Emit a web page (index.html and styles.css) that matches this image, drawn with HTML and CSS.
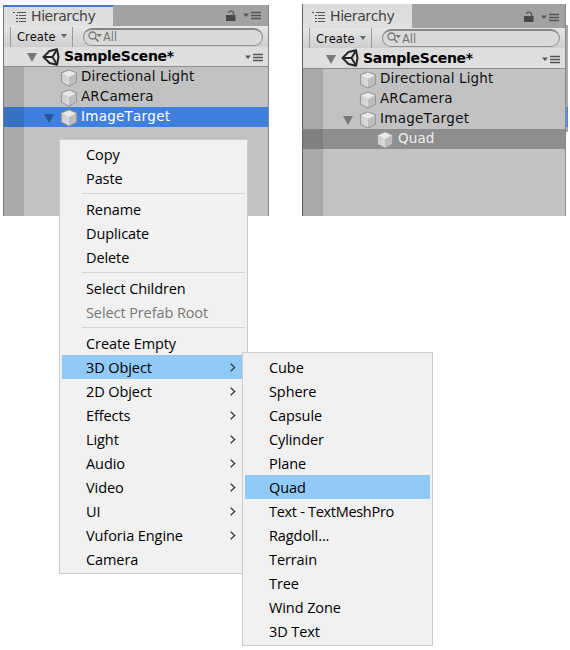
FILE: index.html
```html
<!DOCTYPE html>
<html lang="en">
<head>
<meta charset="utf-8">
<title>Hierarchy</title>
<link rel="stylesheet" href="styles.css">
</head>
<body>
<svg class="defs" width="0" height="0">
  <defs>
    <linearGradient id="face" x1="0" y1="0" x2="1" y2="1"><stop offset="0" stop-color="#c8c8c8"/><stop offset="1" stop-color="#e0e0e0"/></linearGradient>
  </defs>
  <symbol id="list" viewBox="0 0 14 12"><path d="M0 1.500h2M4 1.500h9M3 4.500h2M6 4.500h7M3 7.500h2M6 7.500h7M3 10.500h2M6 10.500h7" stroke="#555" stroke-width="1.200"/></symbol>
  <symbol id="lock" viewBox="0 0 10 12"><path d="M0 5h9.500v6h-9.500z" fill="#474747"/><path d="M2.500 3c.3-2.700 5-2.700 5 .500v3" fill="none" stroke="#5a5a5a" stroke-width="1.300"/></symbol>
  <symbol id="options" viewBox="0 0 18 9"><path d="M0 2.500h6l-3 3.500z" fill="#555"/><path d="M8 1.500h10M8 4.500h10M8 7.500h10" stroke="#555" stroke-width="1.400"/></symbol>
  <symbol id="search" viewBox="0 0 15 13"><circle cx="4.500" cy="4.500" r="3.500" fill="none" stroke="#777" stroke-width="1.300"/><path d="M7 7l3.500 3.500" stroke="#777" stroke-width="1.700"/><path d="M8.500 3h5.500l-2.700 3.200z" fill="#777"/></symbol>
  <symbol id="scene" viewBox="0 0 18 18"><path d="M1.500 9L7.500 3 15 1.200 16.500 9 15 16.800 7.500 15z" fill="#e2e2e2" stroke="#262626" stroke-width="2" stroke-linejoin="round"/><path d="M2 9h8.500M10.500 9L15 1.500M10.500 9l4.500 7.500" stroke="#262626" stroke-width="2"/></symbol>
  <symbol id="cube" viewBox="0 0 18 18"><path d="M9 1l7.500 3v9L9 17l-7.500-4V4z" fill="#ddd" stroke="#979797" stroke-width="1.200"/><path d="M2 4.500L9 8v8.300L2 12.700z" fill="url(#face)"/><path d="M16 4.500L9 8v8.300l7-3.600z" fill="#bebebe"/><path d="M9 1.600l6.500 2.700L9 7.700 2.500 4.300z" fill="#e9e9e9"/></symbol>
  <symbol id="chevron" viewBox="0 0 6 9"><path d="M.7.7l4 3.800-4 3.800" fill="none" stroke="#333" stroke-width="1.200"/></symbol>
</svg>

<main class="canvas">
  <section class="panel first">
    <header class="tabs"><div class="tab"><svg class="list"><use href="#list"/></svg><span>Hierarchy</span></div><svg class="lock"><use href="#lock"/></svg><svg class="options"><use href="#options"/></svg></header>
    <div class="toolbar"><div class="create">Create<i></i></div><div class="search"><svg><use href="#search"/></svg>All</div></div>
    <div class="scene"><i class="fold"></i><svg class="logo"><use href="#scene"/></svg><b>SampleScene*</b><svg class="options"><use href="#options"/></svg></div>
    <div class="tree">
      <div class="node"><svg><use href="#cube"/></svg><span>Directional Light</span></div>
      <div class="node"><svg><use href="#cube"/></svg><span>ARCamera</span></div>
      <div class="node open blue"><i class="fold"></i><svg><use href="#cube"/></svg><span>ImageTarget</span></div>
    </div>
  </section>

  <section class="panel second">
    <header class="tabs"><div class="tab"><svg class="list"><use href="#list"/></svg><span>Hierarchy</span></div><svg class="lock"><use href="#lock"/></svg><svg class="options"><use href="#options"/></svg></header>
    <div class="toolbar"><div class="create">Create<i></i></div><div class="search"><svg><use href="#search"/></svg>All</div></div>
    <div class="scene"><i class="fold"></i><svg class="logo"><use href="#scene"/></svg><b>SampleScene*</b><svg class="options"><use href="#options"/></svg></div>
    <div class="tree">
      <div class="node"><svg><use href="#cube"/></svg><span>Directional Light</span></div>
      <div class="node"><svg><use href="#cube"/></svg><span>ARCamera</span></div>
      <div class="node open"><i class="fold"></i><svg><use href="#cube"/></svg><span>ImageTarget</span></div>
      <div class="node child gray"><svg><use href="#cube"/></svg><span>Quad</span></div>
    </div>
  </section>
  <div class="edge"></div>

  <nav class="menu main-menu">
    <div class="item">Copy</div>
    <div class="item">Paste</div>
    <hr>
    <div class="item">Rename</div>
    <div class="item">Duplicate</div>
    <div class="item">Delete</div>
    <hr>
    <div class="item">Select Children</div>
    <div class="item disabled">Select Prefab Root</div>
    <hr>
    <div class="item">Create Empty</div>
    <div class="item active">3D Object<svg><use href="#chevron"/></svg></div>
    <div class="item">2D Object<svg><use href="#chevron"/></svg></div>
    <div class="item">Effects<svg><use href="#chevron"/></svg></div>
    <div class="item">Light<svg><use href="#chevron"/></svg></div>
    <div class="item">Audio<svg><use href="#chevron"/></svg></div>
    <div class="item">Video<svg><use href="#chevron"/></svg></div>
    <div class="item">UI<svg><use href="#chevron"/></svg></div>
    <div class="item">Vuforia Engine<svg><use href="#chevron"/></svg></div>
    <div class="item">Camera</div>
  </nav>

  <nav class="menu sub-menu">
    <div class="item">Cube</div>
    <div class="item">Sphere</div>
    <div class="item">Capsule</div>
    <div class="item">Cylinder</div>
    <div class="item">Plane</div>
    <div class="item active">Quad</div>
    <div class="item tight">Text - TextMeshPro</div>
    <div class="item">Ragdoll...</div>
    <div class="item">Terrain</div>
    <div class="item">Tree</div>
    <div class="item">Wind Zone</div>
    <div class="item">3D Text</div>
  </nav>
</main>
</body>
</html>
```
FILE: styles.css
```css
* { box-sizing: border-box; }
body { margin: 0; background: #fff; }
.defs { position: absolute; }
.canvas {
  position: relative;
  width: 570px;
  height: 650px;
  overflow: hidden;
  display: flex;
  align-items: flex-start;
}
.panel {
  flex: none;
  display: flex;
  flex-direction: column;
  background: #c2c2c2;
  border-left: 1px solid #777;
  border-right: 1px solid #888;
  font-family: "DejaVu Sans", sans-serif;
  font-kerning: none;
  color: #111;
}
.first { width: 266px; height: 211px; margin: 5px 0 0 3px; }
.second { width: 264px; height: 212px; margin: 4px 0 0 33px; border-left-color: #6d5d5d; margin-left: 33px; }
.edge {
  width: 2px;
  height: 107px;
  margin-top: 25px;
  background: linear-gradient(#aaa 82px, #5b8bd8 82px, #5b8bd8 102px, #aaa 102px);
}
.tabs {
  display: flex;
  align-items: center;
  height: 21px;
  padding-right: 7px;
  background: #a2a2a2;
}
.second .tabs { height: 24px; padding-top: 2px; padding-right: 6px; }
.tab {
  width: 109px;
  height: 21px;
  margin-right: auto;
  padding-left: 9px;
  display: flex;
  align-items: center;
  background: linear-gradient(#dcdcdc, #e0e0e0);
  border-top: 2px solid #3e7ccb;
  font-size: 14px;
  letter-spacing: -.400px;
  color: #444;
}
.tab span { transform: translateY(-1px); }
.second .tab { height: 24px; margin-top: -2px; border-top-color: #dcdcdc; }
.list { width: 14px; height: 12px; margin-right: 4px; }
.lock { width: 10px; height: 12px; margin-right: 7px; }
.options { width: 18px; height: 9px; }
.toolbar {
  display: flex;
  align-items: center;
  height: 21px;
  padding: 0 7px 0 6px;
  background: linear-gradient(#e6e6e6, #cecece);
}
.second .toolbar { height: 20px; }
.create {
  display: flex;
  align-items: center;
  width: 63px;
  height: 20px;
  padding-left: 6px;
  border: solid #999;
  border-width: 0 1px;
  font-size: 11.500px;
}
.second .create { padding-top: 1px; }
.create i {
  margin-left: 6px;
  border: solid transparent;
  border-width: 4px 3px 0;
  border-top-color: #666;
  transform: translateY(-1px);
}
.search {
  flex: 1;
  height: 18px;
  margin-left: 10px;
  margin-right: -2px;
  padding-left: 4px;
  display: flex;
  align-items: center;
  background: #dadada;
  border: 1px solid #929292;
  border-top: 2px solid #858585;
  border-radius: 9px;
  color: #777;
  font-size: 11.500px;
}
.search svg { width: 15px; height: 13px; }
.scene {
  display: flex;
  align-items: center;
  height: 21px;
  padding: 0 5px 0 23px;
  background: #dedede;
  border-bottom: 1px solid #8d8d8d;
}
.first .scene { height: 20px; }
.fold {
  flex: none;
  border: solid transparent;
  border-width: 9px 5px 0;
  border-top-color: #777;
  transform: translateY(1px);
}
.logo { width: 18px; height: 18px; margin-left: 5px; }
.scene b { margin-left: 4px; font-size: 14px; letter-spacing: -.270px; color: #000; transform: translateY(-1px); }
.second .scene b { transform: none; }
.scene .options { margin-left: auto; transform: translateY(1px); }
.tree { flex: 1; background: linear-gradient(90deg, #a9a9a9 20px, #c2c2c2 20px); }
.node {
  height: 20px;
  display: flex;
  align-items: center;
  padding-left: 56px;
  font-size: 13.500px;
  letter-spacing: .120px;
}
.node svg { width: 18px; height: 18px; margin-right: 3px; transform: translateY(1px); }
.node span { transform: translateY(-1px); white-space: nowrap; }
.open { padding-left: 40px; letter-spacing: .250px; }
.open .fold { margin-right: 6px; }
.child { padding-left: 73px; }
.child span { margin-left: 1px; }
.blue { color: #fff; background: linear-gradient(90deg, #3672c4 20px, #3f7fe0 20px); }
.blue .fold { border-top-color: #27549a; }
.gray { color: #eee; background: linear-gradient(90deg, #808080 20px, #8e8e8e 20px); }
.menu {
  position: absolute;
  display: flex;
  flex-direction: column;
  padding: 2px;
  background: #f1f1f1;
  border: 1px solid #ccc;
  font-family: "Open Sans", sans-serif;
  font-size: 14.500px;
  letter-spacing: -.090px;
  color: #000;
}
.main-menu { left: 59px; top: 139px; width: 189px; height: 435px; }
.sub-menu { left: 242px; top: 352px; width: 191px; height: 294px; }
.item {
  flex: none;
  display: flex;
  align-items: center;
  justify-content: space-between;
  height: 24px;
  padding: 0 9px 0 24px;
}
.item svg { width: 6px; height: 9px; }
.tight { letter-spacing: -.300px; }
.active { background: #91c9f7; }
.disabled { color: #777; }
hr {
  flex: none;
  width: 163px;
  height: 1px;
  margin: 3px 0 3px 20px;
  border: 0;
  background: #d4d4d4;
}
```
